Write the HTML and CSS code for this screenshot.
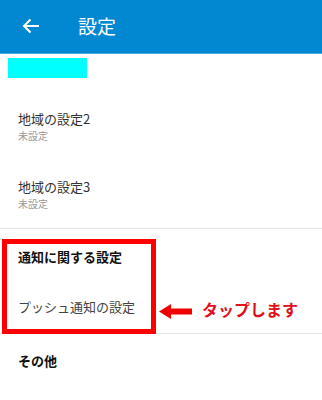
FILE: index.html
```html
<!DOCTYPE html>
<html lang="ja">
<head>
<meta charset="utf-8">
<link rel="stylesheet" href="styles.css">
</head>
<body>
<div class="screen">
  <header class="appbar">
    <svg class="back" width="18" height="16" viewBox="0 0 18 16"><path d="M17 8H2M8.5 1.5L2 8l6.5 6.5" fill="none" stroke="#fff" stroke-width="2"/></svg>
    <span class="title">設定</span>
  </header>
  <div class="top-item"><div class="mask"></div></div>
  <div class="item">
    <div class="item-title">地域の設定2</div>
    <div class="item-sub">未設定</div>
  </div>
  <div class="item">
    <div class="item-title">地域の設定3</div>
    <div class="item-sub">未設定</div>
  </div>
  <div class="section">
    <div class="section-head">通知に関する設定</div>
    <div class="push">プッシュ通知の設定</div>
  </div>
  <div class="section-head other">その他</div>

  <div class="highlight"></div>
  <div class="note">
    <svg class="note-arrow" width="33" height="15" viewBox="0 0 33 15"><path d="M0 7.5L12 0V4.5H33V10.5H12V15Z" fill="#ee0000"/></svg>
    <span class="note-text">タップします</span>
  </div>
</div>
</body>
</html>
```

FILE: styles.css
```css
html, body {
  margin: 0;
  padding: 0;
  background: #fff;
}
body {
  font-family: "Noto Sans CJK JP", "Noto Sans", sans-serif;
}
.screen {
  position: relative;
  width: 322px;
  height: 400px;
  overflow: hidden;
}
.appbar {
  background: #0288d1;
  border-bottom: 1px solid #4aa9e3;
  display: flex;
  align-items: center;
  box-sizing: border-box;
  height: 54px;
}
.back {
  margin-left: 22px;
  margin-top: -2px;
}
.title {
  color: #fff;
  font-size: 19px;
  margin-left: 38px;
  margin-top: -3px;
}
.top-item {
  height: 38px;
  padding: 4px 0 0 8px;
  box-sizing: border-box;
}
.mask {
  width: 79px;
  height: 20px;
  background: #00ffff;
}
.item {
  height: 68px;
  padding-left: 18px;
  display: flex;
  flex-direction: column;
  justify-content: center;
  box-sizing: border-box;
}
.item-title {
  font-size: 13px;
  color: #333;
  line-height: 18px;
}
.item-sub {
  font-size: 10px;
  color: #9a9a9a;
  line-height: 15px;
}
.section {
  border-top: 1px solid #e6e6e6;
  border-bottom: 1px solid #e6e6e6;
}
.section-head {
  font-size: 13px;
  font-weight: bold;
  color: #111;
  padding-left: 18px;
  padding-top: 19px;
  line-height: 18px;
  height: 54px;
  box-sizing: border-box;
}
.push {
  font-size: 13px;
  color: #444;
  padding-left: 18px;
  height: 50px;
  line-height: 18px;
  padding-top: 15px;
  box-sizing: border-box;
}
.other {
  padding-top: 18px;
}
.highlight {
  position: absolute;
  left: 2px;
  top: 239px;
  width: 154px;
  height: 95px;
  border: 5px solid #ff0000;
  box-sizing: border-box;
}
.note {
  position: absolute;
  left: 159px;
  top: 298px;
  display: flex;
  align-items: center;
  gap: 10px;
}
.note-arrow {
  margin-top: 4px;
}
.note-text {
  color: #e0101a;
  font-size: 16px;
  font-weight: bold;
  line-height: 22px;
}
```
